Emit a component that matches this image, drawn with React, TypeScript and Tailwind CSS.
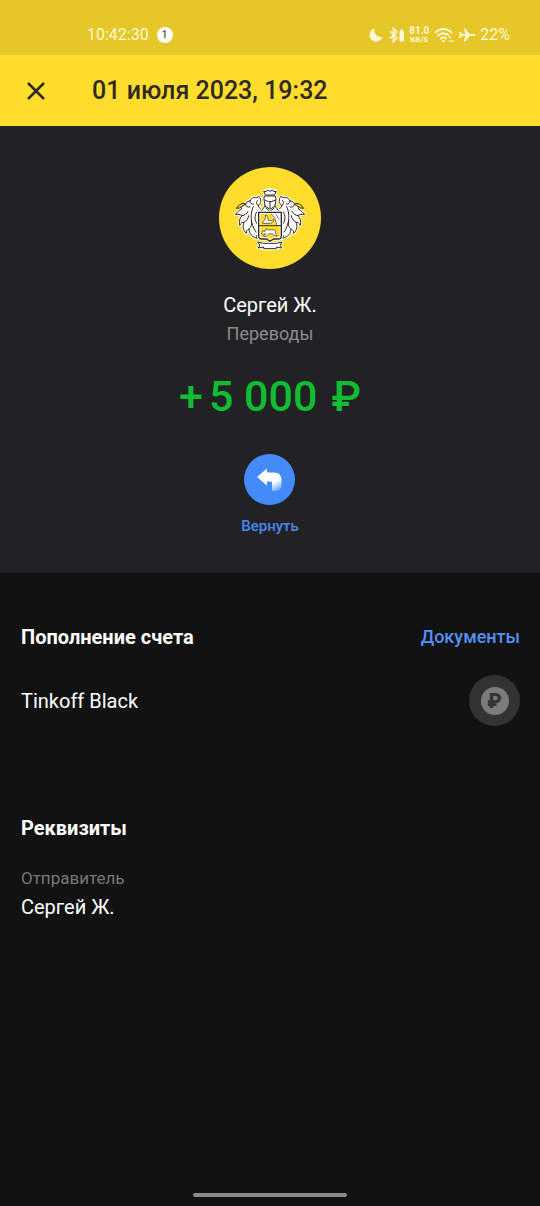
import React from 'react';

const Leaves: React.FC = () => (
  <g>
    <path
      d="M106 82C96 80 87 73 84 64C93 60 96 46 86 36C84 41 80 42 76 40C68 40 62 44 60 51C53 51 48 55 46 61C38 63 34 68 34 76C28 78 22 84 16 92C24 90 31 91 36 95C29 103 26 112 29 124C33 117 37 114 42 115C37 127 39 138 49 148C49 140 52 136 57 135C57 148 66 159 82 163C77 156 80 151 87 150V90Z"
      fill="#fff"
      stroke="#fff"
      strokeWidth="9"
      strokeLinejoin="round"
    />
    <path
      d="M106 82C96 80 87 73 84 64C93 60 96 46 86 36C84 41 80 42 76 40C68 40 62 44 60 51C53 51 48 55 46 61C38 63 34 68 34 76C28 78 22 84 16 92C24 90 31 91 36 95C29 103 26 112 29 124C33 117 37 114 42 115C37 127 39 138 49 148C49 140 52 136 57 135C57 148 66 159 82 163C77 156 80 151 87 150M84 64C78 60 78 52 83 49M60 51C60 58 65 62 71 60M46 61C48 68 54 71 60 69M36 95C45 94 51 89 54 82M42 115C51 110 55 103 56 95M57 135C65 129 66 120 64 110M70 68C60 86 60 120 78 144M80 84C73 94 73 110 82 120"
      fill="none"
    />
    <path d="M20 72C25 63 32 58 43 58L46 62C39 63 35 68 30 71Z" fill="#ffdd2d" />
  </g>
);

const Crest: React.FC = () => (
  <svg
    viewBox="0 0 240 204"
    className="w-20"
    stroke="#30291f"
    strokeWidth="3"
    strokeLinecap="round"
    strokeLinejoin="round"
    aria-hidden="true"
  >
    <Leaves />
    <g transform="translate(240 0) scale(-1 1)">
      <Leaves />
    </g>
    {/* crown and helmet */}
    <path d="M102 20L110 19L120 15L130 19L138 20L136 32L139 44L136 68L148 82H92L104 68L101 44L104 32Z" fill="#fff" stroke="#fff" strokeWidth="8" />
    <path d="M106 32L101 22L109 23L112 18L120 22L128 18L131 23L139 22L134 32Z" fill="#fff" />
    <path d="M104 36H136L138 46L135 66L120 76L105 66L102 46Z" fill="#fff" />
    <path d="M104 48L116 53H124L136 48M120 53V72M105 66L93 82M135 66L147 82" fill="none" />
    <path d="M108 72L120 83L132 72" fill="none" />
    {/* ribbon */}
    <path d="M84 174L100 178H140L156 174L151 184L155 192L139 190V195H101V190L85 192L89 184Z" fill="#fff" stroke="#fff" strokeWidth="8" />
    <path d="M84 174L100 178H140L156 174L151 184L155 192L139 189V194H101V189L85 192L89 184Z" fill="#fff" />
    {/* shield */}
    <path d="M86 85H154V156Q154 165 144 165H130L120 172L110 165H96Q86 165 86 156Z" fill="#ffdd2d" stroke="#fff" strokeWidth="10" />
    <path d="M124 87H152V123H140Z" fill="#fff" stroke="none" />
    <path d="M86 85H154V156Q154 165 144 165H130L120 172L110 165H96Q86 165 86 156Z" fill="none" strokeWidth="4" />
    <path d="M86 125H154" />
    <path d="M98 115C105 109 108 103 106 93C113 94 114 102 114 109C121 111 127 110 132 105C132 112 126 118 117 118H99Z" fill="#fff" strokeWidth="2" />
    <path d="M124 90L134 101L140 121M138 92L147 106" fill="none" strokeWidth="2" />
    <path d="M95 148L98 141L105 142L109 134L114 138L131 137C137 138 138 144 136 148L142 156H135L127 149L116 150L108 157H100L107 149L98 151Z" fill="#fff" strokeWidth="2" />
  </svg>
);

const StatusIcons: React.FC = () => (
  <div className="flex items-center text-[#fff9d4]">
    <svg viewBox="0 0 14 14" className="w-[14px]" fill="currentColor">
      <path d="M5.500 .5C2.500 1.200 .5 3.800 .5 7A6.500 6.500 0 0 0 7 13.500C10.200 13.500 12.800 11.500 13.500 8.700C9 10 4.300 6 5.500 .5Z" />
    </svg>
    <svg viewBox="0 0 16 16" className="ml-[6px] w-4" fill="none" stroke="currentColor" strokeWidth="1.700">
      <path d="M1 4.500L8 11L4.500 14.500V1.500L8 5L1 11.500" />
      <rect x="10.500" y="4" width="4.500" height="10.500" rx="1" fill="currentColor" stroke="none" />
      <path d="M11.500 3H14" />
    </svg>
    <div className="ml-1 flex flex-col items-center font-bold">
      <span className="text-[10px] leading-[10px]">81.0</span>
      <span className="text-[8px] leading-[8px]">KB/S</span>
    </div>
    <svg viewBox="0 0 20 16" className="ml-[5px] w-5" fill="none" stroke="currentColor" strokeWidth="2" strokeLinecap="round">
      <path d="M1.500 5.500C6 .8 13 .8 17.500 5.500M4.300 8.500C7 5.500 12 5.500 14.500 8.500M7 11.500C8.500 10 10.500 10 12 11.500" />
      <circle cx="9.500" cy="14" r="1.200" fill="currentColor" stroke="none" />
      <path d="M16 10.500V10.600M16 14V14.100M18.500 14V14.100" />
    </svg>
    <svg viewBox="0 0 18 16" className="ml-1 w-[18px]" fill="currentColor">
      <path d="M17.500 8C17.500 7.200 16.500 6.900 15.500 6.900H11.500L7.500 1.500H5.800L7.500 6.900H4L2.500 5H1L1.800 8L1 11H2.500L4 9.100H7.500L5.800 14.500H7.500L11.500 9.100H15.500C16.500 9.100 17.500 8.800 17.500 8Z" />
    </svg>
    <span className="ml-1 text-base leading-5">22%</span>
  </div>
);

const App: React.FC = () => {
  return (
    <div className="flex min-h-screen flex-col bg-[#121212] font-[Roboto,sans-serif] text-white">
      <div className="flex h-[55px] items-center justify-between bg-[#e5c729] pt-[14px] pr-[30px] pl-[87px]">
        <div className="flex items-center gap-2 text-[#fff9d4]">
          <span className="text-base leading-5">10:42:30</span>
          <span className="flex size-4 items-center justify-center rounded-full bg-white text-[10px] leading-4 font-medium text-[#5c5122]">
            1
          </span>
        </div>
        <StatusIcons />
      </div>

      <header className="flex h-[71px] items-center bg-[#ffdd2d] pt-px pl-[26px] text-[#30291f]">
        <button type="button" aria-label="Закрыть" className="flex size-5 items-center justify-center">
          <svg viewBox="0 0 20 20" className="size-5" stroke="currentColor" strokeWidth="2.500">
            <path d="M2 2L18 18M18 2L2 18" />
          </svg>
        </button>
        <h1 className="ml-[46px] text-[25px] leading-8 font-medium">01 июля 2023, 19:32</h1>
      </header>

      <section className="flex flex-col items-center bg-[#222224] pt-[41px] pb-[37px]">
        <div className="flex size-[102px] items-center justify-center rounded-full bg-[#ffdd2d]">
          <Crest />
        </div>
        <p className="mt-6 text-xl leading-6">Сергей Ж.</p>
        <p className="mt-[5px] text-lg leading-6 text-[#8b8b8c]">Переводы</p>
        <p className="mt-6 flex text-[43px] leading-[52px] font-medium text-[#0fbc34]">
          <span>+</span>
          <span className="ml-[6px]">5 000</span>
          <span className="ml-[14px]">₽</span>
        </p>
        <button type="button" className="mt-8 flex flex-col items-center text-[#4788f5]">
          <span className="flex size-[51px] items-center justify-center rounded-full bg-[#428bf9]">
            <svg viewBox="0 0 26 24" className="w-[26px]">
              <defs>
                <linearGradient id="tail" x1="16" y1="13" x2="21" y2="24" gradientUnits="userSpaceOnUse">
                  <stop offset="0.100" stopColor="#fff" />
                  <stop offset="1" stopColor="#fff" stopOpacity="0.100" />
                </linearGradient>
              </defs>
              <path
                d="M0 9L10 .5V4.500H17C22 4.500 24.500 7.500 24.500 12V17C24.500 21 22 23 18 23H15V15C15 14 14.500 13.500 13.500 13.500H10V17.500Z"
                fill="url(#tail)"
              />
            </svg>
          </span>
          <span className="mt-[11px] text-[15px] leading-5 font-medium">Вернуть</span>
        </button>
      </section>

      <main className="flex flex-col pt-[50px] pr-5 pl-[21px]">
        <section>
          <div className="flex items-center justify-between leading-6">
            <h2 className="text-xl font-bold">Пополнение счета</h2>
            <a href="#documents" className="text-lg font-medium text-[#5590f6]">
              Документы
            </a>
          </div>
          <div className="mt-6 flex items-center justify-between">
            <span className="text-xl leading-6">Tinkoff Black</span>
            <span className="flex size-[51px] items-center justify-center rounded-full bg-[#333]">
              <span className="flex size-7 items-center justify-center rounded-full bg-[#7b7b7b] text-xl leading-7 font-black text-[#333]">
                ₽
              </span>
            </span>
          </div>
        </section>

        <section className="mt-[90px]">
          <h2 className="text-xl leading-6 font-bold">Реквизиты</h2>
          <dl className="mt-7">
            <dt className="text-[17px] leading-5 text-[#777]">Отправитель</dt>
            <dd className="mt-[7px] text-xl leading-6">Сергей Ж.</dd>
          </dl>
        </section>
      </main>

      <div className="mt-auto flex justify-center pb-[9px]">
        <div className="h-1 w-[154px] rounded-full bg-[#8b8b8b]" />
      </div>
    </div>
  );
};

export default App;
